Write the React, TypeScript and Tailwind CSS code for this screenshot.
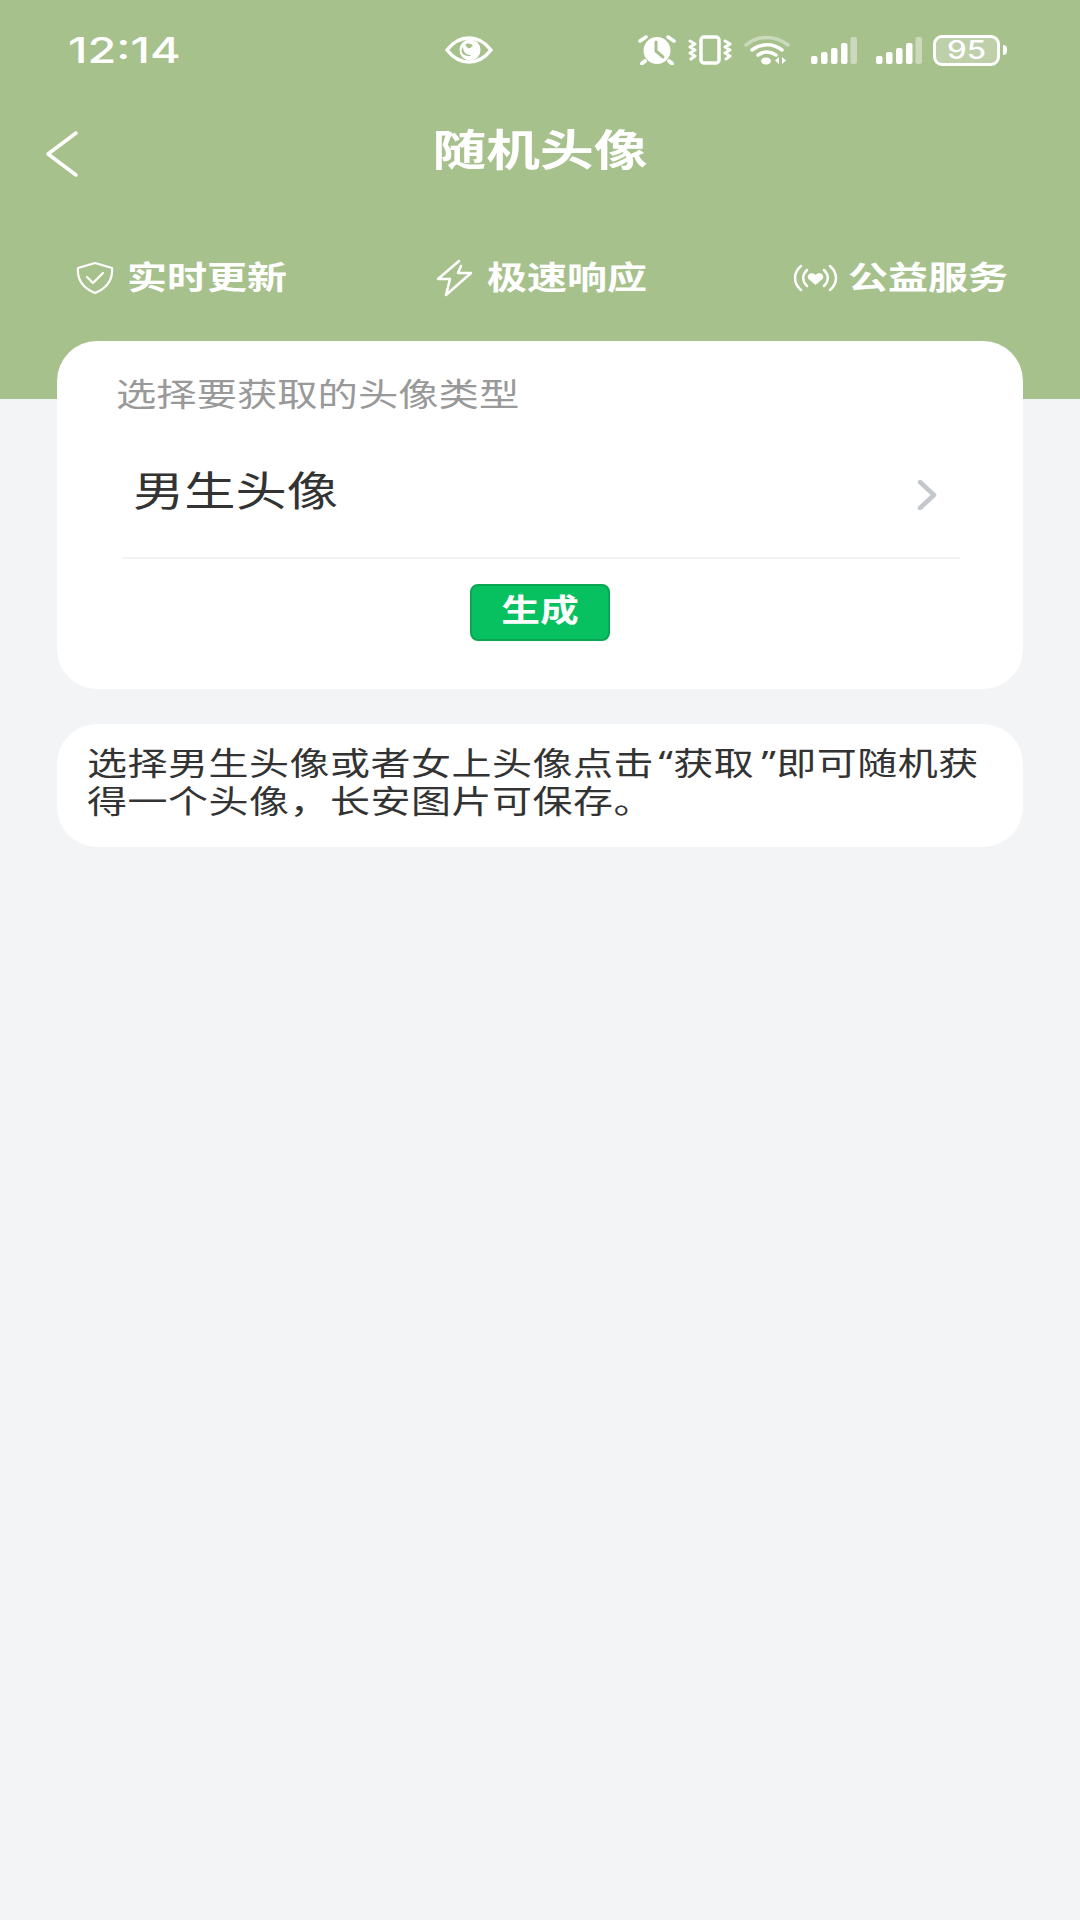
const cjk = "font-['Noto_Sans_CJK_SC','Noto_Sans',sans-serif]";

function EyeIcon() {
  return (
    <svg width="48" height="28" viewBox="0 0 48 28" fill="none">
      <path d="M2 14C9 5 16 2 24 2s15 3 22 12c-7 9-14 12-22 12S9 23 2 14z" stroke="white" strokeWidth="3.500" strokeLinejoin="round" />
      <circle cx="25" cy="14" r="10.500" fill="white" />
      <path d="M18 11c0 5 3 8 8 8-1 2-7 1-9-2-1-2 0-5 1-6zM21 8c3-1 6 0 7 2-2 1-3 3-5 2-2-1-3-3-2-4z" fill="#a7c18d" />
    </svg>
  );
}

function AlarmIcon() {
  return (
    <svg width="38" height="30" viewBox="0 0 38 30" fill="none">
      <circle cx="19" cy="15.500" r="13.500" fill="white" />
      <path d="M18 7v9l7 6" stroke="#a7c18d" strokeWidth="3" strokeLinecap="round" strokeLinejoin="round" />
      <path d="M2 6l6-4M36 6l-6-4" stroke="white" strokeWidth="3.500" strokeLinecap="round" />
      <path d="M7 26l-3 2.500M31 26l3 2.500" stroke="white" strokeWidth="4" strokeLinecap="round" />
    </svg>
  );
}

function VibrateIcon() {
  return (
    <svg width="44" height="30" viewBox="0 0 44 30" fill="none" stroke="white" strokeLinecap="round" strokeLinejoin="round">
      <rect x="13" y="2" width="18" height="26" rx="3" strokeWidth="3.500" />
      <path d="M2 6l5 3-5 3 5 3-5 3 5 3-4 3M37 6l5 3-5 3 5 3-5 3 5 3-4 3" strokeWidth="3" />
    </svg>
  );
}

function WifiIcon() {
  return (
    <svg width="46" height="30" viewBox="0 0 46 30" fill="none" strokeLinecap="round">
      <path d="M2 10C14 0 31 0 44 10" stroke="white" strokeOpacity="0.4" strokeWidth="3.500" />
      <path d="M8 15c9-7 21-7 30 0" stroke="white" strokeWidth="3.500" />
      <path d="M14 20c6-4 12-4 18 0" stroke="white" strokeWidth="3.500" />
      <ellipse cx="22" cy="26" rx="5" ry="3.500" fill="white" />
      <path d="M35 22v7l-4-3.500zM38 22v7l4-3.500z" fill="white" />
    </svg>
  );
}

function SignalIcon() {
  return (
    <svg width="46" height="30" viewBox="0 0 46 30" fill="white">
      <rect x="0" y="21" width="6.500" height="8" rx="2" />
      <rect x="10" y="17" width="6.500" height="12" rx="2" />
      <rect x="20" y="13" width="6.500" height="16" rx="2" />
      <rect x="30" y="8" width="6.500" height="21" rx="2" />
      <rect x="39.500" y="2" width="6.500" height="27" rx="2" fillOpacity="0.4" />
    </svg>
  );
}

function ShieldIcon() {
  return (
    <svg width="38" height="34" viewBox="0 0 38 34" fill="none" stroke="white" strokeWidth="2.200" strokeLinejoin="round" strokeLinecap="round">
      <path d="M19 2 36 7c1 12-5 20-17 25C7 27 1 19 2 7z" />
      <path d="M11 16l6 6 10-10" />
    </svg>
  );
}

function BoltIcon() {
  return (
    <svg width="37" height="38" viewBox="0 0 37 38" fill="none" stroke="white" strokeWidth="2.500" strokeLinejoin="round" strokeLinecap="round">
      <path d="M23 2 2 20h12l-4 16 25-22H22l3-7" />
    </svg>
  );
}

function HeartSignalIcon() {
  return (
    <svg width="45" height="28" viewBox="0 0 45 28" fill="none" stroke="white" strokeWidth="2.500" strokeLinecap="round">
      <path d="M8 2C0 9 0 19 8 26M14 6C9 11 9 17 14 22M37 2c8 7 8 17 0 24M31 6c5 5 5 11 0 16" />
      <path d="M22.500 21l-7-6c-3-5 4-8 7-4 3-4 10-1 7 4z" fill="white" stroke="none" />
    </svg>
  );
}

export default function App() {
  const features = [
    { icon: <ShieldIcon />, label: "实时更新", box: "gap-[13px]" },
    { icon: <BoltIcon />, label: "极速响应", box: "ml-[4px] gap-[14px]" },
    { icon: <HeartSignalIcon />, label: "公益服务", box: "gap-[10px]" },
  ];

  return (
    <div className={`min-h-[1920px] bg-[#f3f4f6] ${cjk}`}>
      <header className="h-[399px] bg-[#a7c18d] pt-[30px] text-white">
        <div className="flex h-[40px] items-center">
          <span className="ml-[68px] w-[112px] origin-left scale-x-[1.3] font-['Inter',sans-serif] text-[36px] leading-none font-medium">12:14</span>
          <span className="ml-[265px] flex">
            <EyeIcon />
          </span>
          <div className="ml-[145px] flex items-center gap-[12px]">
            <AlarmIcon />
            <VibrateIcon />
            <WifiIcon />
            <span className="ml-[9px] flex gap-[19px]">
              <SignalIcon />
              <SignalIcon />
            </span>
            <div className="-ml-[1px] flex items-center gap-[3px]">
              <div className="flex h-[31px] w-[67px] items-center justify-center rounded-[9px] border-[3px] border-white bg-white/25 font-['Inter',sans-serif] text-[25px] leading-none font-medium">
                <span className="scale-x-[1.25]">95</span>
              </div>
              <div className="h-[10px] w-[4px] rounded-r-full bg-white" />
            </div>
          </div>
        </div>

        <div className="relative mt-[40px] flex h-[80px] items-center justify-center">
          <svg className="absolute top-[20px] left-[44px]" width="36" height="48" viewBox="0 0 36 48" fill="none" stroke="white" strokeWidth="3.500" strokeLinecap="round" strokeLinejoin="round">
            <path d="M32 3 4 24l28 21" />
          </svg>
          <h1 className="mb-[6px] scale-x-[1.25] text-[43px] leading-none font-bold">随机头像</h1>
        </div>

        <div className="mt-[63px] flex h-[50px] items-center justify-between pr-[72px] pl-[76px]">
          {features.map((item) => (
            <div key={item.label} className={`flex items-center ${item.box}`}>
              {item.icon}
              <span className="mx-[16px] mb-[6px] scale-x-[1.25] text-[32px] leading-none font-bold">{item.label}</span>
            </div>
          ))}
        </div>
      </header>

      <main className="-mt-[58px] flex flex-col gap-[35px] px-[57px]">
        <section className="h-[348px] rounded-[40px] bg-white pt-[29px]">
          <p className="ml-[59px] w-fit origin-left scale-x-[1.26] text-[32px] leading-[44px] text-[#999999]">选择要获取的头像类型</p>
          <div className="mt-[23px] mr-[63px] ml-[65px] flex h-[122px] items-center justify-between border-b-2 border-[#f2f2f2] pr-[23px] pl-[11px]">
            <span className="mb-[17px] origin-left scale-x-[1.25] text-[41px] leading-none text-[#333333]">男生头像</span>
            <svg className="mb-[4px]" width="20" height="30" viewBox="0 0 20 30" fill="none" stroke="#c4c7cc" strokeWidth="4.500" strokeLinecap="round" strokeLinejoin="round">
              <path d="M3 2l14 13L3 28" />
            </svg>
          </div>
          <div className="mt-[25px] flex justify-center">
            <button className="h-[57px] w-[140px] rounded-[8px] border-2 border-[#0aa653] bg-[#07c160] pb-[10px] text-[31px] leading-none font-bold text-white">
              <span className="inline-block scale-x-[1.25]">生成</span>
            </button>
          </div>
        </section>

        <section className="h-[123px] rounded-[40px] bg-white px-[30px] pt-[20px]">
          <p className="w-[725px] origin-left scale-x-[1.25] font-['Noto_Sans','Noto_Sans_CJK_SC',sans-serif] text-[32px] leading-[38px] tracking-[0.4px] text-[#333333]">
            {"选择男生头像或者女上头像点击\u200a“获取\u2009”即可随机获得一个头像，长安图片可保存。"}
          </p>
        </section>
      </main>
    </div>
  );
}
